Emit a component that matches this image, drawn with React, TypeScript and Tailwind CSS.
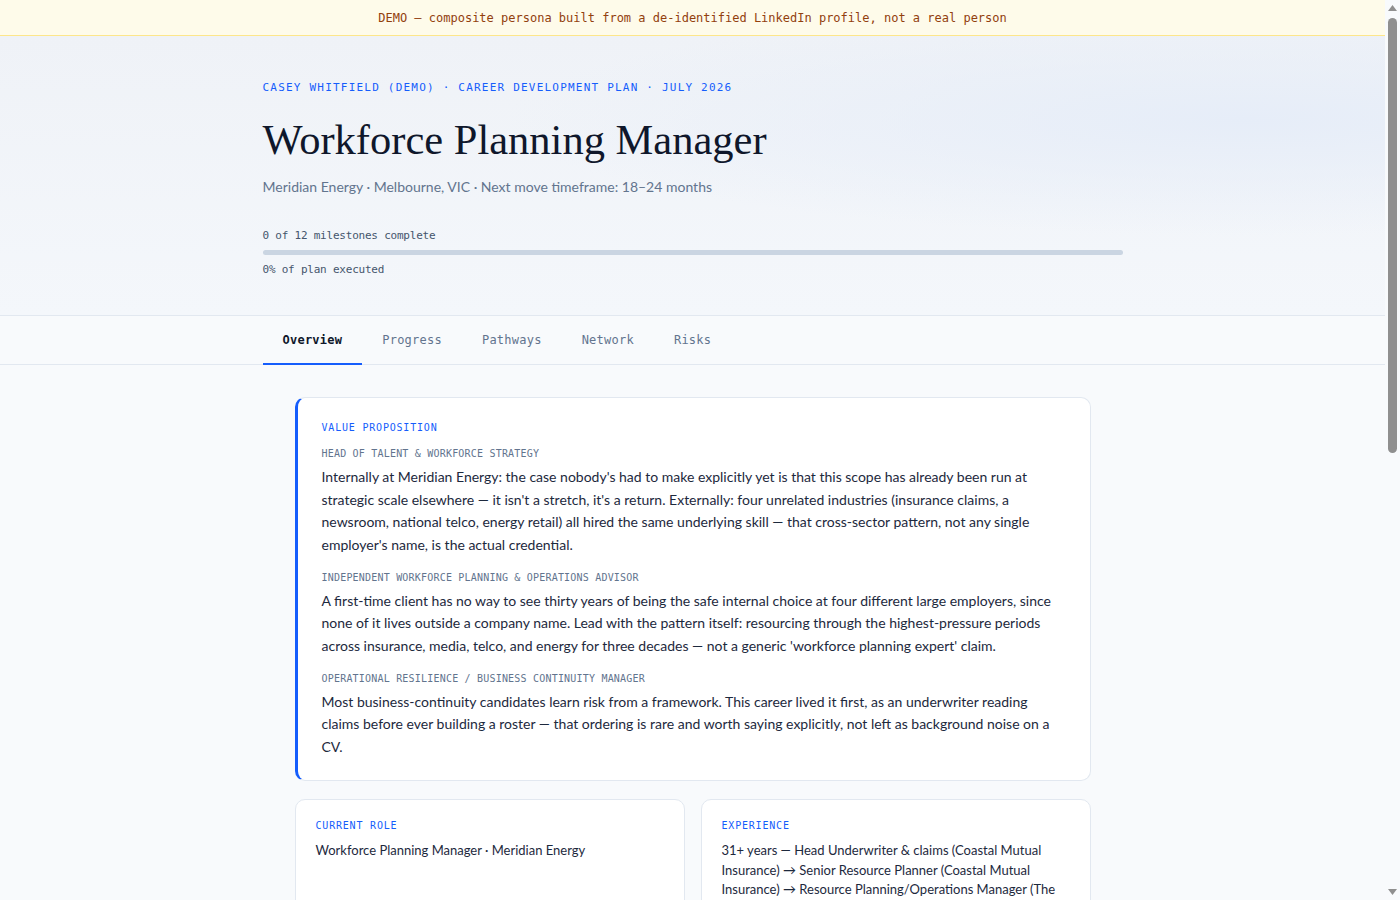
import React, { useState } from 'react';

const tabs = ['Overview', 'Progress', 'Pathways', 'Network', 'Risks'];

const propositions = [
  {
    role: 'Head of Talent & Workforce Strategy',
    text: "Internally at Meridian Energy: the case nobody's had to make explicitly yet is that this scope has already been run at strategic scale elsewhere — it isn't a stretch, it's a return. Externally: four unrelated industries (insurance claims, a newsroom, national telco, energy retail) all hired the same underlying skill — that cross-sector pattern, not any single employer's name, is the actual credential.",
  },
  {
    role: 'Independent Workforce Planning & Operations Advisor',
    text: "A first-time client has no way to see thirty years of being the safe internal choice at four different large employers, since none of it lives outside a company name. Lead with the pattern itself: resourcing through the highest-pressure periods across insurance, media, telco, and energy for three decades — not a generic 'workforce planning expert' claim.",
  },
  {
    role: 'Operational Resilience / Business Continuity Manager',
    text: 'Most business-continuity candidates learn risk from a framework. This career lived it first, as an underwriter reading claims before ever building a roster — that ordering is rare and worth saying explicitly, not left as background noise on a CV.',
  },
];

const facts = [
  { label: 'Current role', text: 'Workforce Planning Manager · Meridian Energy' },
  {
    label: 'Experience',
    text: '31+ years — Head Underwriter & claims (Coastal Mutual Insurance) → Senior Resource Planner (Coastal Mutual Insurance) → Resource Planning/Operations Manager (The Daily Courier) → Workforce Planning Lead (Northline Telco) → Workforce Planning Manager (Meridian Energy)',
  },
  { label: 'Education', text: 'Diploma of Business (Insurance) · Certificate IV in Workplace Assessment' },
  { label: 'Location', text: 'Melbourne, VIC · open to hybrid, limited interstate travel' },
  {
    label: 'Core strengths',
    text: 'Capacity modelling, roster design under peak load, claims-surge planning, stakeholder negotiation with unions and operations leads, translating demand forecasts into headcount decisions.',
  },
  {
    label: 'Gaps to close',
    text: 'Formal people-analytics tooling, board-level reporting, a visible external profile (talks, writing) outside the current employer.',
  },
];

const nextSteps = [
  {
    when: 'Next 30 days',
    text: 'Write the one-paragraph cross-sector story and test it on two trusted peers outside Meridian Energy.',
  },
  {
    when: 'Next 90 days',
    text: 'Take ownership of one board-facing workforce report end to end, so the gap in executive reporting closes on the record.',
  },
];

const mono = "font-['DejaVu_Sans_Mono',monospace]";

// Static scrollbar drawn beside the scrolling page
const ScrollRail: React.FC = () => (
  <div className="flex w-[15px] shrink-0 flex-col items-center bg-[#f8fafc] py-[5px]">
    <svg width="9" height="6" viewBox="0 0 9 6">
      <path d="M4.5 0 L9 6 L0 6 Z" fill="#8f8f8f" />
    </svg>
    <div className="mt-[7px] h-[435px] w-[9px] rounded-full bg-[#8f8f8f]" />
    <div className="flex-1" />
    <svg width="9" height="6" viewBox="0 0 9 6">
      <path d="M0 0 L9 0 L4.5 6 Z" fill="#8f8f8f" />
    </svg>
  </div>
);

export default function App() {
  const [active, setActive] = useState('Overview');

  return (
    <div className="flex h-screen bg-[#f8fafc] font-['Lato',sans-serif] text-slate-800">
      <div className="min-w-0 flex-1 overflow-y-auto">
        {/* Demo notice */}
        <div className={`flex h-9 items-center justify-center border-b border-[#fde68a] bg-[#fefbea] text-[12px] text-[#92400e] ${mono}`}>
          DEMO — composite persona built from a de-identified LinkedIn profile, not a real person
        </div>

        {/* Hero */}
        <header className="border-b border-slate-200 bg-[radial-gradient(ellipse_at_90%_30%,#e6edf8_0%,rgba(230,237,248,0)_42%),linear-gradient(180deg,#eff2f7_0%,#f4f7fb_100%)]">
          <div className="mx-auto max-w-[860px] pb-[37px] pt-[44px]">
            <p className={`text-[11px] uppercase leading-4 tracking-[0.11em] text-blue-600 ${mono}`}>
              Casey Whitfield (demo) · Career development plan · July 2026
            </p>
            <h1 className="mt-[22px] font-['Liberation_Serif',serif] text-[42.5px] font-normal leading-[44px] text-slate-900">
              Workforce Planning Manager
            </h1>
            <p className="mt-[14px] text-[14px] leading-[22px] text-slate-500">
              Meridian Energy · Melbourne, VIC · Next move timeframe: 18–24 months
            </p>
            <p className={`mt-[30px] text-[11px] leading-4 tracking-[-0.02em] text-slate-600 ${mono}`}>
              0 of 12 milestones complete
            </p>
            <div className="mt-[6px] h-[5px] w-full rounded-full bg-slate-300">
              <div className="h-full rounded-full bg-blue-600" style={{ width: '0%' }} />
            </div>
            <p className={`mt-[7px] text-[11px] leading-4 tracking-[-0.02em] text-slate-600 ${mono}`}>
              0% of plan executed
            </p>
          </div>
        </header>

        {/* Tabs */}
        <nav className="border-b border-slate-200 bg-[#f8fafc]">
          <div className="mx-auto flex max-w-[860px]">
            {tabs.map((tab) => (
              <button
                key={tab}
                onClick={() => setActive(tab)}
                className={`-mb-px h-[49px] border-b-2 px-5 text-[12px] tracking-[0.02em] ${mono} ${
                  active === tab
                    ? 'border-blue-600 font-semibold text-slate-900'
                    : 'border-transparent text-slate-500'
                }`}
              >
                {tab}
              </button>
            ))}
          </div>
        </nav>

        <main className="mx-auto max-w-[860px] px-8 pb-16 pt-8">
          {/* Value proposition */}
          <section className="rounded-[10px] border border-l-[3px] border-slate-200 border-l-blue-600 bg-white px-6 pb-[22px] pt-[22px]">
            <h2 className={`text-[10px] uppercase leading-[15px] tracking-[0.08em] text-blue-600 ${mono}`}>
              Value proposition
            </h2>
            <div className="mt-[11px]">
              {propositions.map((p, i) => (
                <div key={p.role} className={i > 0 ? 'mt-[13.5px]' : ''}>
                  <h3 className={`text-[10px] uppercase leading-[15px] tracking-[0.02em] text-slate-500 ${mono}`}>
                    {p.role}
                  </h3>
                  <p className="mt-[5px] text-[14px] leading-[22.5px] text-slate-800">{p.text}</p>
                </div>
              ))}
            </div>
          </section>

          {/* Profile facts */}
          <div className="mt-[18px] grid grid-cols-2 gap-4">
            {facts.map((f) => (
              <div key={f.label} className="rounded-[10px] border border-slate-200 bg-white px-5 pb-5 pt-[18px]">
                <h2 className={`text-[10px] uppercase leading-[15px] tracking-[0.08em] text-blue-600 ${mono}`}>
                  {f.label}
                </h2>
                <p className="mt-[8px] text-[13px] leading-[19.5px] text-slate-800">{f.text}</p>
              </div>
            ))}
          </div>

          {/* Near-term moves */}
          <section className="mt-[18px] rounded-[10px] border border-slate-200 bg-white px-6 py-[22px]">
            <h2 className={`text-[10px] uppercase leading-[15px] tracking-[0.08em] text-blue-600 ${mono}`}>
              Near-term moves
            </h2>
            <ul className="mt-[11px] space-y-[13px]">
              {nextSteps.map((s) => (
                <li key={s.when}>
                  <h3 className={`text-[10px] uppercase leading-[15px] tracking-[0.02em] text-slate-500 ${mono}`}>
                    {s.when}
                  </h3>
                  <p className="mt-[5px] text-[14px] leading-[22.5px] text-slate-800">{s.text}</p>
                </li>
              ))}
            </ul>
          </section>
        </main>
      </div>
      <ScrollRail />
    </div>
  );
}
